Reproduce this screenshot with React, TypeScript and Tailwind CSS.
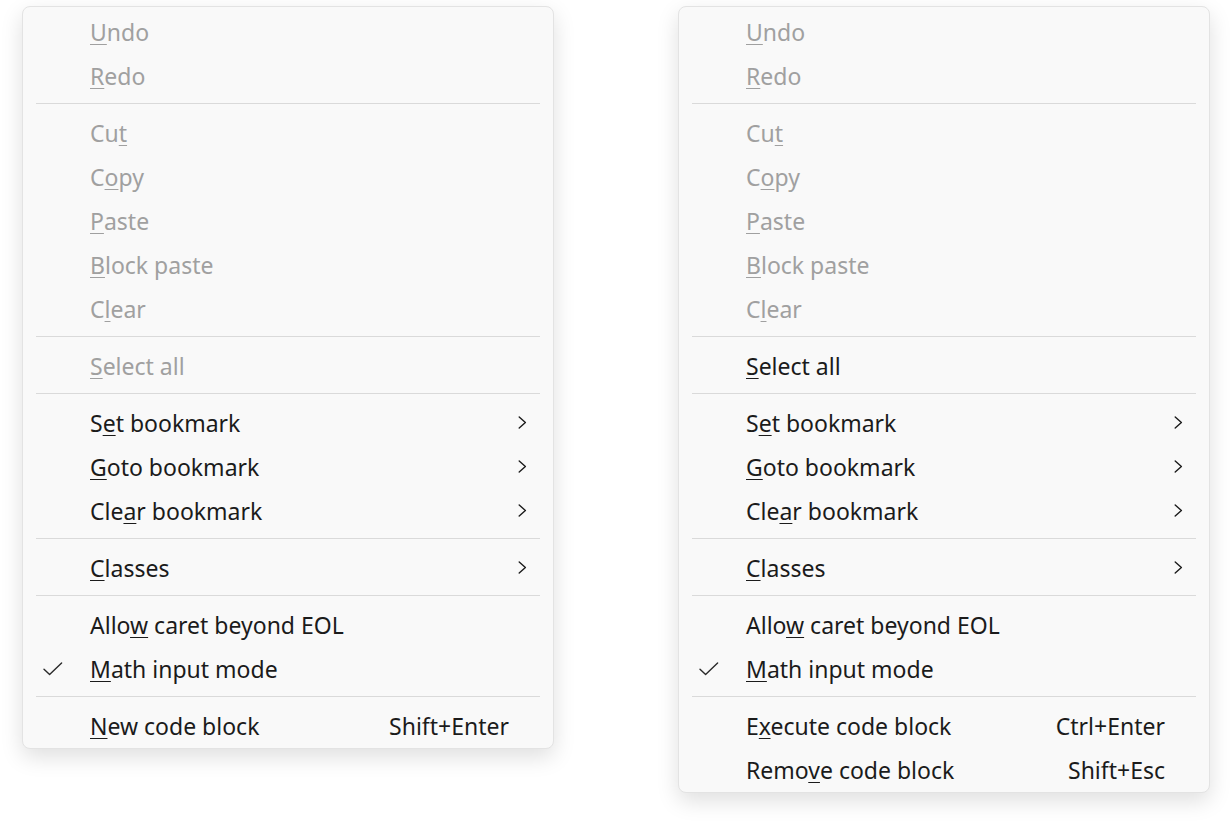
type Item =
  | { sep: true }
  | {
      sep?: false
      label: string
      u: number
      disabled?: boolean
      checked?: boolean
      sub?: boolean
      keys?: string
    }

const SEP: Item = { sep: true }

const head: Item[] = [
  { label: "Undo", u: 0, disabled: true },
  { label: "Redo", u: 0, disabled: true },
  SEP,
  { label: "Cut", u: 2, disabled: true },
  { label: "Copy", u: 1, disabled: true },
  { label: "Paste", u: 0, disabled: true },
  { label: "Block paste", u: 0, disabled: true },
  { label: "Clear", u: 1, disabled: true },
  SEP,
]

const middle: Item[] = [
  SEP,
  { label: "Set bookmark", u: 1, sub: true },
  { label: "Goto bookmark", u: 0, sub: true },
  { label: "Clear bookmark", u: 3, sub: true },
  SEP,
  { label: "Classes", u: 0, sub: true },
  SEP,
  { label: "Allow caret beyond EOL", u: 4 },
  { label: "Math input mode", u: 0, checked: true },
  SEP,
]

const leftMenu: Item[] = [
  ...head,
  { label: "Select all", u: 0, disabled: true },
  ...middle,
  { label: "New code block", u: 0, keys: "Shift+Enter" },
]

const rightMenu: Item[] = [
  ...head,
  { label: "Select all", u: 0 },
  ...middle,
  { label: "Execute code block", u: 1, keys: "Ctrl+Enter" },
  { label: "Remove code block", u: 4, keys: "Shift+Esc" },
]

function Check() {
  return (
    <svg width="20" height="14" viewBox="0 0 20 14" fill="none">
      <path d="M1 7.2 L6.6 12.6 L18.6 1" stroke="#2b2b2b" strokeWidth="1.4" strokeLinecap="round" strokeLinejoin="round" />
    </svg>
  )
}

function Chevron() {
  return (
    <svg width="9" height="13" viewBox="0 0 9 13" fill="none">
      <path d="M1.2 1 L7.4 6.5 L1.2 12" stroke="#1b1b1b" strokeWidth="1.4" strokeLinecap="round" strokeLinejoin="round" />
    </svg>
  )
}

function Label({ text, u }: { text: string; u: number }) {
  return (
    <span className="whitespace-pre">
      {text.slice(0, u)}
      <span className="underline decoration-1 underline-offset-[3px]">{text[u]}</span>
      {text.slice(u + 1)}
    </span>
  )
}

function Menu({ items }: { items: Item[] }) {
  return (
    <div className="w-[532px] rounded-lg border border-[#e3e3e3] bg-[#f9f9f9] pt-[2px] pb-px shadow-[0_8px_22px_rgba(0,0,0,0.13)]">
      {items.map((item, i) =>
        item.sep ? (
          <div key={i} className="mx-[13px] my-[6px] h-px bg-[#dadada]" />
        ) : (
          <div
            key={i}
            className={`flex h-[44px] items-center pl-[20px] pr-[26px] pt-[2px] ${
              item.disabled ? "text-[#a0a0a0]" : "text-[#1b1b1b]"
            }`}
          >
            <div className="flex w-[47px] items-center">{item.checked && <Check />}</div>
            <div className="flex-1">
              <Label text={item.label} u={item.u} />
            </div>
            {item.keys && <span className="mr-[18px]">{item.keys}</span>}
            {item.sub && (
              <span className="-mt-[2px] flex">
                <Chevron />
              </span>
            )}
          </div>
        )
      )}
    </div>
  )
}

export default function App() {
  return (
    <div
      className="flex h-[831px] w-[1232px] items-start gap-[124px] bg-white pl-[22px] pt-[6px] text-[23px] leading-[30px]"
      style={{ fontFamily: '"Noto Sans", "Open Sans", sans-serif' }}
    >
      <Menu items={leftMenu} />
      <Menu items={rightMenu} />
    </div>
  )
}
